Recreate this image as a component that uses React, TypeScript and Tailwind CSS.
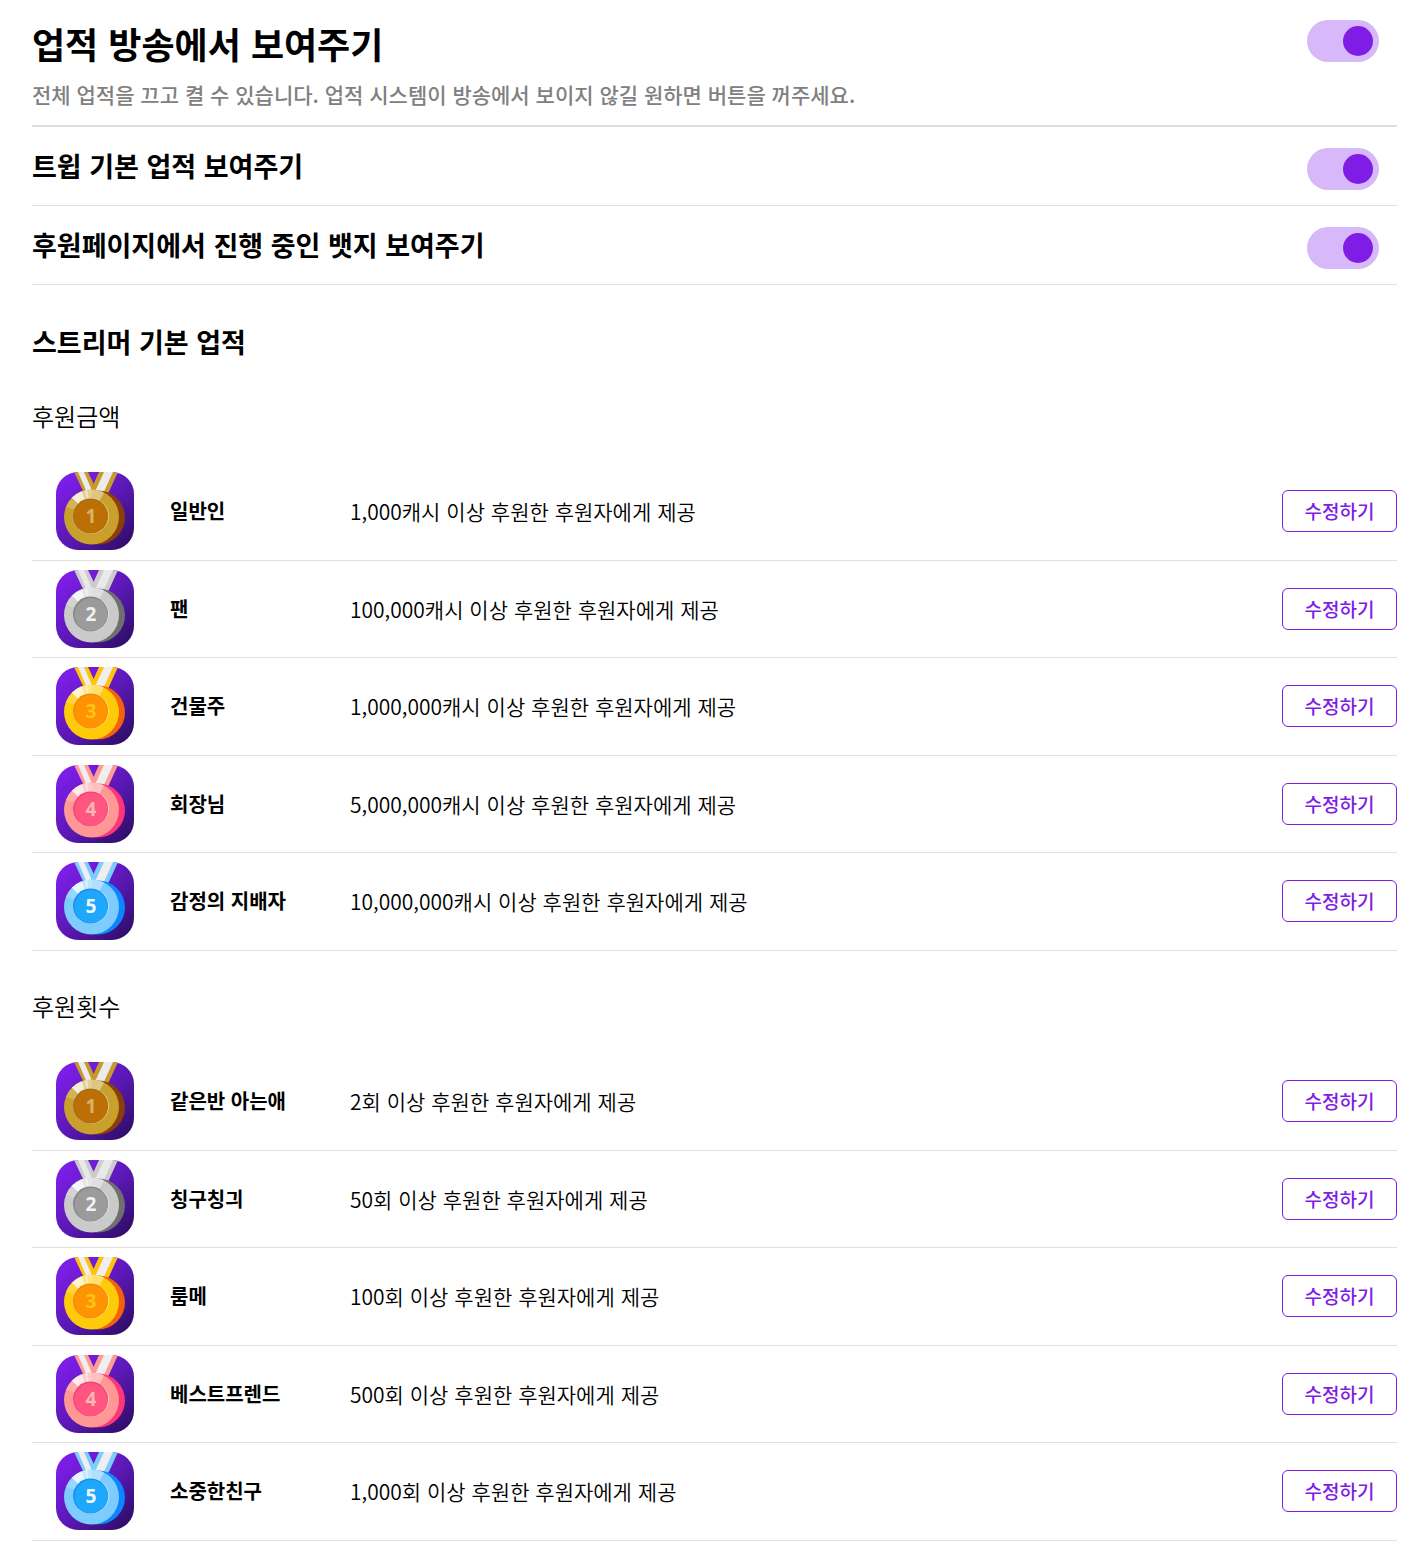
import React from "react";

type Medal = {
  level: number;
  ribbon: string;
  stripe: string;
  edge: string;
  face: string;
  core: string;
  rim: string;
  digit: string;
};

const medals: Medal[] = [
  { level: 1, ribbon: "#c8992b", stripe: "#ececec", edge: "#8a3f08", face: "#c9a02c", core: "#bd6f05", rim: "#a3701a", digit: "#d9b468" },
  { level: 2, ribbon: "#cccccc", stripe: "#e9e9e9", edge: "#6f6f6f", face: "#cacaca", core: "#9b9b9b", rim: "#858585", digit: "#f2f2f2" },
  { level: 3, ribbon: "#ffc20e", stripe: "#efefef", edge: "#f4600c", face: "#ffcb08", core: "#ff9304", rim: "#f08a00", digit: "#ffc414" },
  { level: 4, ribbon: "#ff9b96", stripe: "#efefef", edge: "#ff3579", face: "#ff9794", core: "#ff5580", rim: "#f54474", digit: "#ffb9b4" },
  { level: 5, ribbon: "#7ccdff", stripe: "#efefef", edge: "#0c86ff", face: "#7dccff", core: "#1fa8fb", rim: "#1b8fe6", digit: "#eef7ff" },
];

function MedalIcon({ medal, id }: { medal: Medal; id: string }) {
  return (
    <svg viewBox="0 0 78 78" className="size-[78px] shrink-0" aria-hidden="true">
      <defs>
        <linearGradient id={`${id}-bg`} x1="0.1" y1="0.1" x2="0.95" y2="1">
          <stop offset="0" stopColor="#7d1ee8" />
          <stop offset="0.5" stopColor="#5a18b4" />
          <stop offset="1" stopColor="#2a0c60" />
        </linearGradient>
        <clipPath id={`${id}-tile`}>
          <rect width="78" height="78" rx="22" />
        </clipPath>
        <clipPath id={`${id}-disc`}>
          <circle cx="35.5" cy="45" r="27.5" />
        </clipPath>
      </defs>
      <g clipPath={`url(#${id}-tile)`}>
        <rect width="78" height="78" fill={`url(#${id}-bg)`} />
        <path d="M18 0H32L43 23H29Z" fill={medal.ribbon} />
        <path d="M22 0H28L38 23H32Z" fill={medal.stripe} />
        <path d="M43 0H62L51 24H32Z" fill={medal.ribbon} />
        <path d="M48 0H57L46 24H37Z" fill={medal.stripe} />
        <circle cx="42" cy="45.500" r="27" fill={medal.edge} />
        <circle cx="35.5" cy="45" r="27.5" fill={medal.face} />
        <g clipPath={`url(#${id}-disc)`} fill="#fff">
          <path d="M35 44L0 31L10 14Z" fillOpacity="0.2" />
          <path d="M35 44L10 20L22 8Z" fillOpacity="0.8" />
          <path d="M35 44L22 8L37 8Z" fillOpacity="0.5" />
          <path d="M35 44L26 8L30 8Z" fillOpacity="0.4" />
          <path d="M35 44L37 8L54 10Z" fillOpacity="0.4" />
        </g>
        <circle cx="35" cy="44" r="17.5" fill={medal.face} stroke="#fff" strokeOpacity="0.45" />
        <circle cx="34.5" cy="44" r="17.5" fill={medal.rim} />
        <circle cx="35" cy="44.5" r="16.5" fill={medal.core} />
        <text x="35" y="51" textAnchor="middle" fontSize="19" fontWeight="700" fill={medal.digit} className="font-['Noto_Sans']">
          {medal.level}
        </text>
      </g>
    </svg>
  );
}

function SettingRow({ id, title, note }: { id: string; title: string; note?: string }) {
  return (
    <div className={`flex items-start justify-between border-[#dfdfdf] pr-[18px] ${note ? "border-b-2 pt-5 pb-[15px]" : "border-b pt-[21px] pb-[15px]"}`}>
      <div className="text-black">
        <label htmlFor={id} className={`block ${note ? "text-4xl leading-[46px] font-bold" : "text-[27px] leading-9 font-bold"}`}>
          {title}
        </label>
        {note && <p className="mt-3 text-[21px] leading-8 font-medium text-[#808080]">{note}</p>}
      </div>
      <input
        id={id}
        type="checkbox"
        role="switch"
        defaultChecked
        className="h-[42px] w-[72px] shrink-0 cursor-pointer appearance-none rounded-full bg-gray-300 p-1.5 before:block before:size-[30px] before:rounded-full before:bg-white checked:bg-[#d7b8f8] checked:before:ml-[30px] checked:before:bg-[#7f1de6]"
      />
    </div>
  );
}

type Achievement = { name: string; rule: string };

function AchievementList({ id, title, items }: { id: string; title: string; items: Achievement[] }) {
  return (
    <section>
      <h3 className="pt-[35px] pb-[27px] text-2xl leading-10 font-[350] text-black">{title}</h3>
      <ul>
        {items.map((item, i) => (
          <li key={item.name} className="border-b border-[#dfdfdf] pt-[9px] pb-[9px] odd:pb-2.5">
            <div className="flex items-center pl-6">
              <MedalIcon medal={medals[i]} id={`${id}-${i}`} />
              <strong className="ml-9 w-[180px] shrink-0 text-xl leading-8 font-bold text-black">{item.name}</strong>
              <p className="min-w-0 flex-1 text-[21px] leading-8 font-[350] text-black">{item.rule}</p>
              <button type="button" className="h-[42px] w-[115px] shrink-0 cursor-pointer rounded-md border border-[#7f1de6] bg-white text-[19px] font-medium text-[#7f1de6]">
                수정하기
              </button>
            </div>
          </li>
        ))}
      </ul>
    </section>
  );
}

const amounts: Achievement[] = [
  { name: "일반인", rule: "1,000캐시 이상 후원한 후원자에게 제공" },
  { name: "팬", rule: "100,000캐시 이상 후원한 후원자에게 제공" },
  { name: "건물주", rule: "1,000,000캐시 이상 후원한 후원자에게 제공" },
  { name: "회장님", rule: "5,000,000캐시 이상 후원한 후원자에게 제공" },
  { name: "감정의 지배자", rule: "10,000,000캐시 이상 후원한 후원자에게 제공" },
];

const counts: Achievement[] = [
  { name: "같은반 아는애", rule: "2회 이상 후원한 후원자에게 제공" },
  { name: "칭구칭긔", rule: "50회 이상 후원한 후원자에게 제공" },
  { name: "룸메", rule: "100회 이상 후원한 후원자에게 제공" },
  { name: "베스트프렌드", rule: "500회 이상 후원한 후원자에게 제공" },
  { name: "소중한친구", rule: "1,000회 이상 후원한 후원자에게 제공" },
];

export default function App() {
  return (
    <main lang="ko" className="bg-white pr-[29px] pb-3 pl-8 font-['Noto_Sans_CJK_KR',sans-serif]">
      <SettingRow
        id="show-all"
        title="업적 방송에서 보여주기"
        note="전체 업적을 끄고 켤 수 있습니다. 업적 시스템이 방송에서 보이지 않길 원하면 버튼을 꺼주세요."
      />
      <SettingRow id="show-default" title="트윕 기본 업적 보여주기" />
      <SettingRow id="show-badge" title="후원페이지에서 진행 중인 뱃지 보여주기" />
      <h2 className="pt-[38px] text-[27px] leading-[38px] font-bold text-black">스트리머 기본 업적</h2>
      <AchievementList id="amount" title="후원금액" items={amounts} />
      <AchievementList id="count" title="후원횟수" items={counts} />
    </main>
  );
}
